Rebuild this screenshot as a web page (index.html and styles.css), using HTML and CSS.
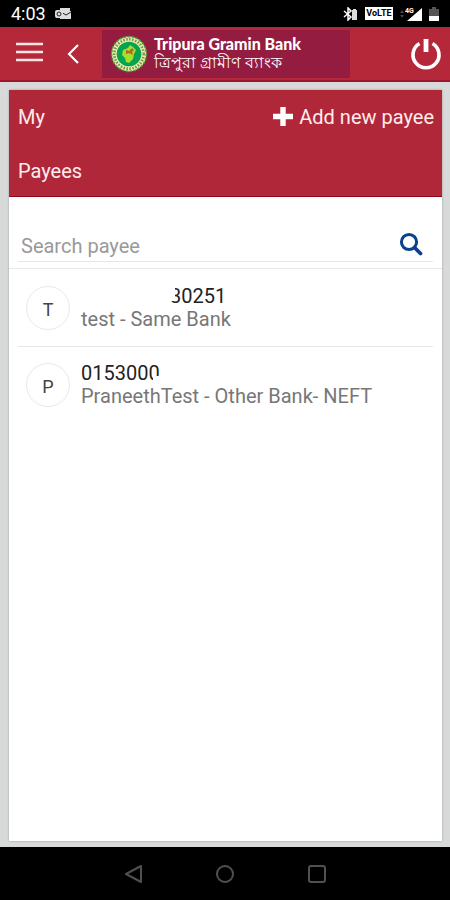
FILE: index.html
```html
<!DOCTYPE html>
<html lang="en">
<head>
    <meta charset="UTF-8">
    <meta name="viewport" content="width=device-width, initial-scale=1.0">
    <title>My Payees</title>
    <link rel="stylesheet" href="styles.css">
</head>
<body>
    <div class="statusbar">
        <span class="clock">4:03</span>
        <svg class="mail" width="18" height="14" viewBox="0 0 18 14">
            <path d="M6 1h10v3h1v8H6z" fill="#ddd"/>
            <path d="M7 5l5 3 5-3" fill="none" stroke="#222" stroke-width="1"/>
            <rect x="1" y="3" width="8" height="8" rx="2" fill="#ddd"/>
            <circle cx="5" cy="7" r="2" fill="none" stroke="#222" stroke-width="1"/>
        </svg>
        <div class="indicators">
            <svg width="15" height="14" viewBox="0 0 15 14">
                <path d="M1 4l7 6-3 3V1l3 3-7 6" fill="none" stroke="#fff" stroke-width="1.5"/>
                <path d="M9 3h1V2h3v1h1v10H9z" fill="#ddd"/>
            </svg>
            <span class="volte">VoLTE</span>
            <svg width="22" height="16" viewBox="0 0 22 16">
                <path d="M0 7l2-3 2 3zM0 9l2 3 2-3z" fill="#444"/>
                <path d="M22 2v13H7z" fill="#fff"/>
                <text class="network" x="5" y="7">4G</text>
            </svg>
            <svg width="10" height="16" viewBox="0 0 10 16">
                <path d="M0 3h3V1h4v2h3v7H0z" fill="#555"/>
                <path d="M0 10h10v5H0z" fill="#fff"/>
            </svg>
        </div>
    </div>

    <header class="topbar">
        <button class="icon-button menu" type="button" aria-label="Menu">
            <svg width="27" height="20" viewBox="0 0 27 20">
                <path d="M0 2h27M0 10h27M0 18h27" stroke="#ffe4e4" stroke-width="2.4"/>
            </svg>
        </button>
        <button class="icon-button back" type="button" aria-label="Back">
            <svg width="13" height="20" viewBox="0 0 13 20">
                <path d="M11 1L2 10l9 9" fill="none" stroke="#fff" stroke-width="2.2"/>
            </svg>
        </button>
        <div class="brand">
            <svg class="logo" width="38" height="38" viewBox="0 0 38 38">
                <circle cx="19" cy="19" r="17.4" fill="#e9edb0" stroke="#4f9a32" stroke-width="1.6" stroke-dasharray="2.5 1.5"/>
                <circle cx="19" cy="19" r="14.7" fill="none" stroke="#6f9348" stroke-width="2.6" stroke-dasharray="1.5 1.5"/>
                <circle cx="19" cy="19" r="12.3" fill="#06a44f"/>
                <path d="M13 15l5-2 2-3 3 2 3 3-2 4-1 5-4 4-3-1-1-4-3-3z" fill="#a5df2c"/>
                <path d="M16 15l3 1 3-3 2 2-2 2 1 3-4-2-3 1z" fill="#b4642d"/>
            </svg>
            <div class="brand-text">
                <span class="brand-name">Tripura Gramin Bank</span>
                <span class="brand-local" lang="bn">ত্রিপুরা গ্রামীণ ব্যাংক</span>
            </div>
        </div>
        <button class="icon-button power" type="button" aria-label="Log out">
            <svg width="32" height="34" viewBox="0 0 32 34">
                <path d="M9.5 6.5a13 13 0 1 0 13 0" fill="none" stroke="#fff" stroke-width="3.6"/>
                <path d="M16 2v13" stroke="#fff" stroke-width="4.8"/>
            </svg>
        </button>
    </header>

    <main class="content">
        <section class="card">
            <div class="card-header">
                <h1 class="card-title">My<br>Payees</h1>
                <button class="add-payee" type="button">
                    <svg width="20" height="20" viewBox="0 0 20 20">
                        <path d="M10 0v19M0 9.5h20" stroke="#fff" stroke-width="5.4"/>
                    </svg>
                    Add new payee
                </button>
            </div>
            <form class="search">
                <div class="search-field">
                    <input class="search-input" type="text" placeholder="Search payee" aria-label="Search payee">
                    <button class="icon-button" type="submit" aria-label="Search">
                        <svg width="24" height="24" viewBox="0 0 24 24">
                            <circle cx="10" cy="10" r="7.6" fill="none" stroke="#0b4190" stroke-width="3"/>
                            <path d="M15.5 15.5l6 6" stroke="#0b4190" stroke-width="3.8" stroke-linecap="round"/>
                        </svg>
                    </button>
                </div>
            </form>
            <ul class="payees">
                <li class="payee">
                    <span class="avatar">T</span>
                    <div class="payee-text">
                        <span class="account masked-start">30251</span>
                        <span class="payee-name">test - Same Bank</span>
                    </div>
                </li>
                <li class="payee">
                    <span class="avatar">P</span>
                    <div class="payee-text">
                        <span class="account masked-end">0153000</span>
                        <span class="payee-name">PraneethTest - Other Bank- NEFT</span>
                    </div>
                </li>
            </ul>
        </section>
    </main>

    <nav class="navbar">
        <button class="icon-button" type="button" aria-label="System back">
            <svg width="20" height="20" viewBox="0 0 20 20">
                <path d="M18 2v16L3 10z" fill="none" stroke="#505050" stroke-width="2" stroke-linejoin="round"/>
            </svg>
        </button>
        <button class="icon-button" type="button" aria-label="Home">
            <svg width="20" height="20" viewBox="0 0 20 20">
                <circle cx="10" cy="10" r="8" fill="none" stroke="#505050" stroke-width="2"/>
            </svg>
        </button>
        <button class="icon-button" type="button" aria-label="Recent apps">
            <svg width="20" height="20" viewBox="0 0 20 20">
                <rect x="2" y="2" width="16" height="16" rx="2" fill="none" stroke="#505050" stroke-width="2"/>
            </svg>
        </button>
    </nav>
</body>
</html>
```

FILE: styles.css
```css
* {
    box-sizing: border-box;
}
body {
    font-family: Roboto, "Noto Sans", sans-serif;
    font-size: 20px;
    margin: 0;
    min-height: 100vh;
    display: flex;
    flex-direction: column;
    background-color: #d8d9d9;
}
button {
    font: inherit;
    color: inherit;
    cursor: pointer;
}
svg {
    display: block;
    flex: none;
}
.icon-button {
    display: block;
    padding: 0;
    border: none;
    background: none;
}
.statusbar {
    display: flex;
    align-items: center;
    gap: 8px;
    height: 27px;
    padding: 0 11px;
    background-color: #000;
    color: #fff;
}
.clock {
    font-size: 18px;
}
.indicators {
    display: flex;
    align-items: center;
    gap: 7px;
    margin-left: auto;
}
.volte {
    width: 28px;
    background-color: #fff;
    color: #000;
    font-size: 9px;
    font-weight: bold;
    line-height: 13px;
    text-align: center;
}
.network {
    fill: #fff;
    font-size: 7px;
    font-weight: bold;
}
.topbar {
    display: flex;
    align-items: center;
    height: 55px;
    padding: 0 8px 0 16px;
    background-color: #b4283a;
    border-bottom: 2px solid #9c1730;
}
.menu {
    padding-bottom: 4px;
}
.back {
    margin-left: 24px;
}
.brand {
    display: flex;
    align-items: center;
    gap: 6px;
    flex: 0 1 248px;
    height: 48px;
    margin-left: 22px;
    padding-left: 8px;
    background-color: #931c40;
    color: #fff;
}
.brand-text {
    display: flex;
    flex-direction: column;
    white-space: nowrap;
}
.brand-name {
    font-family: Lato, sans-serif;
    font-size: 16px;
    font-weight: 900;
    line-height: 18px;
}
.brand-local {
    font-size: 16px;
    line-height: 20px;
}
.power {
    margin-left: auto;
}
.content {
    flex: 1;
    display: flex;
    padding: 8px 8px 6px 9px;
}
.card {
    flex: 1;
    background-color: #fff;
    box-shadow: 0 0 2px rgba(0,0,0,0.3);
}
.card-header {
    display: flex;
    justify-content: space-between;
    align-items: flex-start;
    height: 107px;
    padding: 0 8px 0 9px;
    background-color: #b0273a;
    border-bottom: 1px solid #930618;
    color: #ffecec;
}
.card-title {
    margin: 0;
    font-size: 20px;
    font-weight: normal;
    line-height: 54px;
}
.add-payee {
    display: flex;
    align-items: center;
    gap: 6px;
    padding: 0;
    border: none;
    background: none;
    line-height: 54px;
}
.search {
    padding: 29px 9px 6px;
    border-bottom: 1px solid #e6e8e8;
}
.search-field {
    display: flex;
    align-items: center;
    height: 36px;
    padding: 0 10px 0 3px;
    border-bottom: 1px solid #e6e8e8;
}
.search-input {
    flex: 1;
    min-width: 0;
    padding: 4px 0 0;
    border: none;
    outline: none;
    font: inherit;
    color: #333;
}
.search-input::placeholder {
    color: #999;
}
.payees {
    margin: 0;
    padding: 0 9px;
    list-style: none;
}
.payee {
    display: flex;
    align-items: center;
    gap: 11px;
    height: 77px;
    padding: 0 8px;
}
.payee + .payee {
    border-top: 1px solid #e6e8e8;
}
.avatar {
    width: 44px;
    height: 44px;
    border: 1px solid #e9e9e9;
    border-radius: 50%;
    color: #444;
    font-size: 18px;
    line-height: 46px;
    text-align: center;
}
.payee-text {
    display: flex;
    flex-direction: column;
    align-items: flex-start;
    line-height: 23px;
}
.account {
    position: relative;
    color: #222;
}
.masked-start {
    margin-left: 89px;
}
.masked-start::before,
.masked-end::after {
    content: "";
    position: absolute;
    background-color: #fff;
}
.masked-start::before {
    top: 0;
    left: 0;
    width: 5px;
    height: 16px;
}
.masked-end::after {
    right: 0;
    bottom: 0;
    width: 7px;
    height: 9px;
}
.payee-name {
    color: #777;
}
.navbar {
    display: flex;
    justify-content: center;
    align-items: center;
    gap: 72px;
    height: 53px;
    background-color: #000;
}
```
